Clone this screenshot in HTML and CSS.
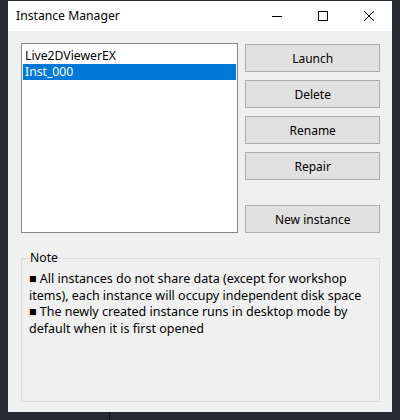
FILE: index.html
```html
<!DOCTYPE html>
<html lang="en">
<head>
    <meta charset="UTF-8" />
    <title>Instance Manager</title>
    <link rel="stylesheet" href="styles.css">
</head>
<body>
    <div class="window">
        <div class="titlebar">
            <span class="title">Instance Manager</span>
            <div class="controls">
                <span class="ctrl">
                    <svg width="10" height="10" viewBox="0 0 10 10"><path d="M0 5.5H10" stroke="#000" stroke-width="1" /></svg>
                </span>
                <span class="ctrl">
                    <svg width="10" height="10" viewBox="0 0 10 10"><rect x="0.5" y="0.5" width="9" height="9" fill="none" stroke="#000" stroke-width="1" /></svg>
                </span>
                <span class="ctrl">
                    <svg width="10" height="10" viewBox="0 0 10 10"><path d="M0 0L10 10M10 0L0 10" stroke="#000" stroke-width="1" /></svg>
                </span>
            </div>
        </div>

        <div class="content">
            <div class="top-row">
                <ul class="listbox">
                    <li>Live2DViewerEX</li>
                    <li class="selected">Inst_000</li>
                </ul>
                <div class="buttons">
                    <button class="button">Launch</button>
                    <button class="button">Delete</button>
                    <button class="button">Rename</button>
                    <button class="button">Repair</button>
                    <button class="button new-instance">New instance</button>
                </div>
            </div>

            <fieldset class="note">
                <legend>Note</legend>
                <p>■ All instances do not share data (except for workshop items), each instance will occupy independent disk space</p>
                <p>■ The newly created instance runs in desktop mode by default when it is first opened</p>
            </fieldset>
        </div>
    </div>
    <div class="taskline"></div>
</body>
</html>
```

FILE: styles.css
```css
body {
    margin: 0;
    padding: 0;
    width: 400px;
    height: 420px;
    background-color: #272a30;
    font-family: "Noto Sans", "Open Sans", sans-serif;
    font-size: 12px;
    color: #000;
    overflow: hidden;
    position: relative;
}

.window {
    margin: 1px 0 0 8px;
    width: 384px;
    height: 411px;
    background-color: #f0f0f0;
    display: flex;
    flex-direction: column;
}

.titlebar {
    height: 30px;
    background-color: #fff;
    display: flex;
    align-items: center;
    justify-content: space-between;
}

.title {
    padding-left: 8px;
    padding-bottom: 2px;
    font-size: 12.2px;
}

.controls {
    display: flex;
    height: 100%;
}

.ctrl {
    width: 46px;
    display: flex;
    align-items: center;
    justify-content: center;
}

.ctrl svg {
    display: block;
    shape-rendering: crispEdges;
}

.content {
    flex: 1;
    padding: 12px 12px 10px 13px;
    display: flex;
    flex-direction: column;
}

.top-row {
    display: flex;
    gap: 7px;
    height: 190px;
}

.listbox {
    list-style: none;
    margin: 0;
    padding: 4px 1px 1px 1px;
    width: 214px;
    border: 1px solid #828790;
    background-color: #fff;
}

.listbox li {
    height: 16px;
    line-height: 16px;
    padding-left: 2px;
    white-space: nowrap;
    font-size: 12.2px;
}

.listbox li.selected {
    background-color: #0078d7;
    color: #fff;
}

.buttons {
    display: flex;
    flex-direction: column;
    gap: 8px;
    padding-top: 1px;
    width: 135px;
}

.button {
    height: 28px;
    margin: 0;
    padding: 0;
    border: 1px solid #adadad;
    background-color: #e1e1e1;
    font-family: inherit;
    font-size: 12px;
    color: #000;
}

.new-instance {
    margin-top: auto;
}

.note {
    margin: 17px 0 0 0;
    padding: 5px 7px 0 7px;
    flex: 1;
    border: 1px solid #dcdcdc;
    min-width: 0;
}

.note legend {
    padding: 0 1px;
    line-height: 16px;
    font-size: 12.2px;
}

.note p {
    margin: 0;
    font-size: 12.5px;
    line-height: 16.7px;
}

.taskline {
    position: absolute;
    left: 109px;
    top: 412px;
    width: 1px;
    height: 8px;
    background-color: #111316;
}
```
